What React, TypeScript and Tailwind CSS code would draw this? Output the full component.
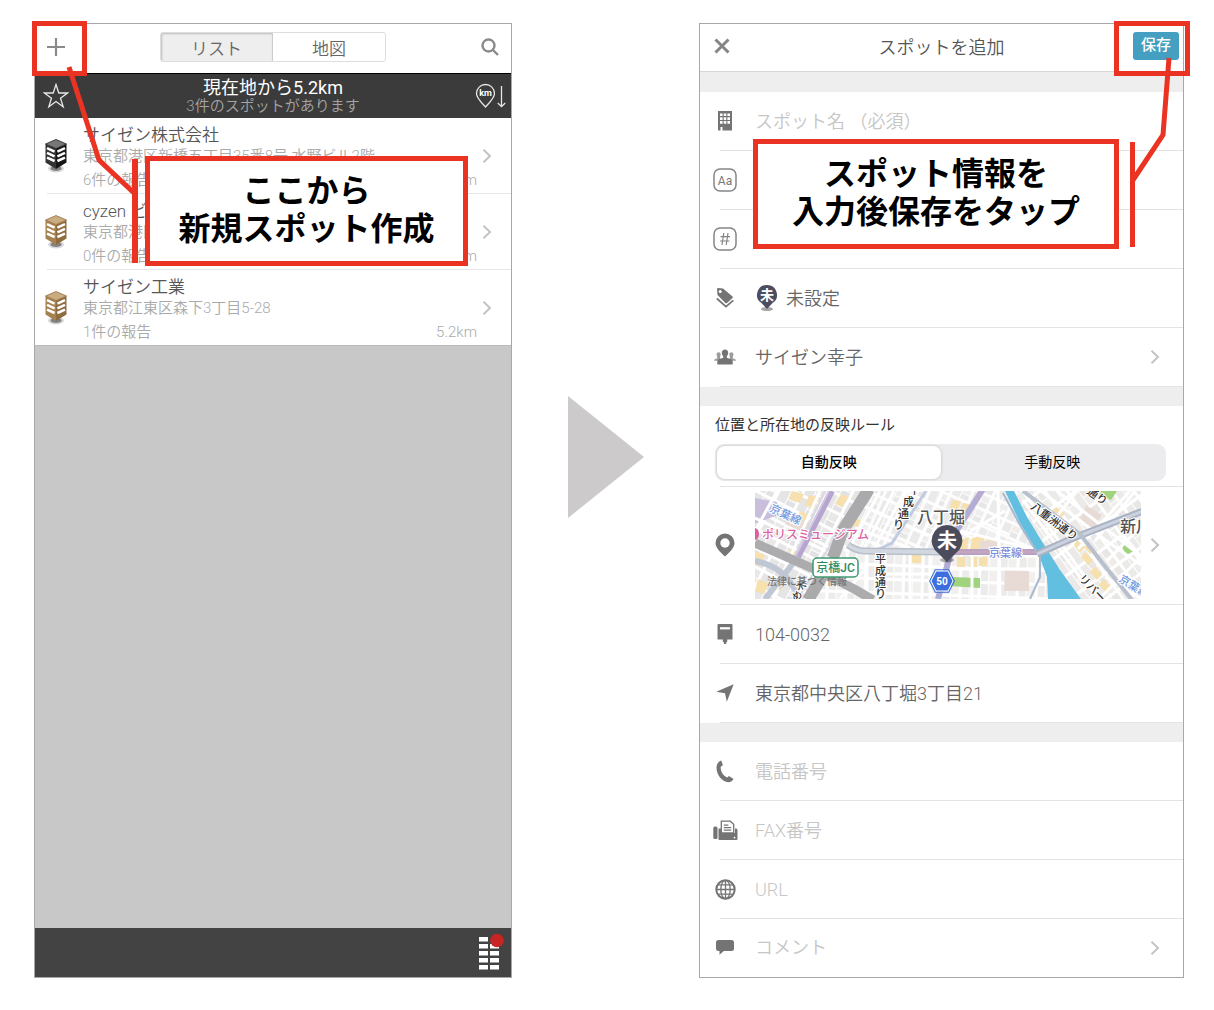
import type { ReactNode } from 'react'
import { clsx } from 'clsx'

const spots = [
  {
    name: 'サイゼン株式会社',
    address: '東京都港区新橋五丁目35番8号 水野ビル2階',
    reports: '6件の報告',
    distance: '5.2km',
    dark: true,
  },
  {
    name: 'cyzen ビル',
    address: '東京都港区新橋',
    reports: '0件の報告',
    distance: '5.2km',
    dark: false,
  },
  {
    name: 'サイゼン工業',
    address: '東京都江東区森下3丁目5-28',
    reports: '1件の報告',
    distance: '5.2km',
    dark: false,
  },
]

function Chevron() {
  return (
    <svg width="10" height="16" viewBox="0 0 10 16" fill="none" stroke="#c4c4c4" strokeWidth="2">
      <path d="M1.5 1.8 8 8l-6.500 6.200" />
    </svg>
  )
}

function Building({ dark }: { dark: boolean }) {
  const left = dark ? '#333' : '#a5814f'
  const right = dark ? '#161616' : '#8f6c3e'
  const top = dark ? '#777' : '#c9ac82'
  const edge = dark ? '#222' : '#94703f'
  return (
    <svg width="24" height="36" viewBox="0 0 24 36">
      <ellipse cx="12" cy="30.500" rx="8" ry="4" fill="#000" opacity=".15" />
      <ellipse cx="12" cy="30.500" rx="5.500" ry="2.500" fill="#000" opacity=".4" />
      <path d="M1.500 6v18.500L12 31V10.500z" fill={left} />
      <path d="M22.500 6v18.500L12 31V10.500z" fill={right} />
      <path d="M12 1.500 1.500 6 12 10.500 22.500 6z" fill={top} stroke={edge} strokeWidth=".8" />
      <path
        d="M3 10.200l7.600 3.400M3 14.900l7.600 3.400M3 19.600l7.600 3.400M21 10.200l-7.600 3.400M21 14.900l-7.600 3.400M21 19.600l-7.600 3.400"
        stroke="#fff"
        strokeWidth="2.500"
      />
    </svg>
  )
}

function UnsetPin() {
  return (
    <svg width="22" height="28" viewBox="0 0 22 28">
      <ellipse cx="11" cy="25" rx="6" ry="2" fill="#000" opacity=".35" />
      <path d="M11 1a9.800 9.800 0 0 1 5.500 18L11 25l-5.500-6A9.800 9.800 0 0 1 11 1z" fill="#4b4e61" />
      <text x="11" y="16" textAnchor="middle" fontSize="14" fontWeight="700" fill="#fff">未</text>
    </svg>
  )
}

const icons = {
  building: (
    <svg width="16" height="20" viewBox="0 0 16 20">
      <path d="M1 0h14v19.500H5.500V16H3.500v3.500H1z" fill="#747474" />
      <path
        d="M3 2.500h2.600v2.600H3zM6.700 2.500h2.600v2.600H6.700zM10.400 2.500H13v2.600h-2.600zM3 6.300h2.600v2.600H3zM6.700 6.300h2.600v2.600H6.700zM10.400 6.300H13v2.600h-2.600zM3 10.100h2.600v2.600H3zM6.700 10.100h2.600v2.600H6.700zM10.400 10.100H13v2.600h-2.600z"
        fill="#fff"
      />
    </svg>
  ),
  letters: (
    <svg width="24" height="24" viewBox="0 0 24 24">
      <rect x="1" y="1" width="22" height="22" rx="6" fill="none" stroke="#858585" strokeWidth="1.500" />
      <text x="12" y="16.500" textAnchor="middle" fontSize="12" fontWeight="400" fill="#777">Aa</text>
    </svg>
  ),
  hash: (
    <svg width="24" height="24" viewBox="0 0 24 24" fill="none" stroke="#858585" strokeWidth="1.500">
      <rect x="1" y="1" width="22" height="22" rx="6" />
      <path d="M10.800 6 9 18M15 6l-1.800 12M7.500 9.700h9.500M7 14h9.500" strokeWidth="1.200" />
    </svg>
  ),
  tags: (
    <svg width="18" height="22" viewBox="0 0 18 22">
      <path
        d="M1 2.200Q1 1 2.200 1L7 1.500 16.500 9.500q.8.800 0 1.600L11 16q-.8.600-1.600 0L1.500 8z"
        fill="#747474"
      />
      <circle cx="4.200" cy="4.400" r="1.500" fill="#fff" />
      <path d="M.8 11.500l9.200 8.200 7.300-6.300" fill="none" stroke="#747474" strokeWidth="1.700" />
    </svg>
  ),
  people: (
    <svg width="22" height="16" viewBox="0 0 22 16" fill="#747474">
      <circle cx="4.600" cy="5.400" r="2.100" opacity=".7" />
      <circle cx="17.400" cy="5.400" r="2.100" opacity=".7" />
      <path d="M0 11.800q0-1.800 3.200-2.300V7h3v4.800zM22 11.800q0-1.800-3.200-2.300V7h-3v4.800z" opacity=".7" />
      <path d="M11 .5c2 0 3.200 1.300 3.200 3.300 0 1.500-.6 2.700-1.400 3.400v1.600c2.800.9 5.400 1.500 5.900 3.200V15.500H3.300V12c.5-1.700 3.100-2.300 5.900-3.200V7.200C8.400 6.500 7.800 5.300 7.800 3.800 7.800 1.800 9 .5 11 .5z" />
    </svg>
  ),
  place: (
    <svg width="20" height="24" viewBox="0 0 20 24">
      <path d="M10 .5a9.500 9.500 0 0 1 9.500 9.500c0 4.500-5 9.500-9.500 13.500C5.500 19.500.5 14.500.5 10A9.500 9.500 0 0 1 10 .5z" fill="#747474" />
      <circle cx="10" cy="10" r="4.700" fill="#fff" />
    </svg>
  ),
  mailbox: (
    <svg width="16" height="20" viewBox="0 0 16 20">
      <path d="M1.500 0h13q1 0 1 1v14.500h-5.300V18H9.300v2H6.900v-2H5.800v-2.500H.5V1q0-1 1-1z" fill="#747474" />
      <path d="M3 3.200h10v2.200H3z" fill="#fff" />
    </svg>
  ),
  arrow: (
    <svg width="18" height="18" viewBox="0 0 18 18">
      <path d="M17.700.3 10.800 17.700 9 9.300.2 7.800z" fill="#747474" />
    </svg>
  ),
  phone: (
    <svg width="18" height="23" viewBox="0 0 18 23">
      <path
        d="M5.300.5 6.900 5.300 4.700 6.800c-.3 4.500 2.300 9 6.600 10.700l1.600-1.600 4.700 3.100c-1.300 2-3 3.300-5.300 3.300C5.800 22 .3 14.500.5 7.500.6 4 2.600 1 5.300.5z"
        fill="#747474"
      />
    </svg>
  ),
  fax: (
    <svg width="25" height="21" viewBox="0 0 25 21">
      <rect x=".3" y="6.500" width="4.200" height="12.500" rx="1.500" fill="#747474" />
      <path d="M5.500 8.500H8V13h14V8.500h1q1.500 0 1.500 1.500v9q0 1-1 1h-17q-1 0-1-1z" fill="#747474" />
      <path d="M8.300 13V1.200h9l3.400 3.200V13z" fill="#fff" stroke="#747474" strokeWidth="1.300" />
      <path d="M10.800 5.200h4.500M10.800 7.700h7.400M10.800 10.200h7.400" stroke="#747474" strokeWidth="1.200" />
      <circle cx="21.500" cy="17.600" r=".9" fill="#fff" />
    </svg>
  ),
  globe: (
    <svg width="21" height="21" viewBox="0 0 21 21" fill="none" stroke="#747474" strokeWidth="1.300">
      <circle cx="10.500" cy="10.500" r="9.200" strokeWidth="2" />
      <ellipse cx="10.500" cy="10.500" rx="4.700" ry="9.200" />
      <path d="M10.500 1v19M1 10.500h19M2.800 5.800h15.400M2.800 15.200h15.400" />
    </svg>
  ),
  comment: (
    <svg width="18" height="15" viewBox="0 0 18 15">
      <path d="M2.500 0h13Q18 0 18 2.500v6q0 2.500-2.500 2.500H7.800L3.500 14.800V11h-1Q0 11 0 8.500v-6Q0 0 2.500 0z" fill="#747474" />
    </svg>
  ),
}

function Row({ icon, children, chevron, last }: { icon: ReactNode; children?: ReactNode; chevron?: boolean; last?: boolean }) {
  return (
    <>
      <div className={clsx('flex items-center text-[18px] font-[350] text-[#666]', last ? 'h-[57px]' : 'h-[58px]')}>
        <div className="flex w-[50px] shrink-0 justify-center">{icon}</div>
        <div className="flex min-w-0 flex-1 items-center pl-[5px]">{children}</div>
        {chevron && <div className="pr-[23px]"><Chevron /></div>}
      </div>
      {!last && <div className="ml-5 h-px bg-[#e3e3e3]" />}
    </>
  )
}

function Field({ label, placeholder, type = 'text' }: { label: string; placeholder?: string; type?: string }) {
  return (
    <input
      type={type}
      aria-label={label}
      placeholder={placeholder}
      className="w-full bg-transparent font-[350] outline-none placeholder:text-[#c6c6c6]"
    />
  )
}

function Band({ className = 'h-[19px]' }: { className?: string }) {
  return <div className={clsx('bg-[#eee]', className)} />
}

function StreetMap() {
  return (
    <svg viewBox="0 0 386 108" preserveAspectRatio="xMidYMid slice" className="block h-[108px] w-full">
      <defs>
        <pattern id="west" width="22" height="17" patternUnits="userSpaceOnUse" patternTransform="rotate(27)">
          <rect width="22" height="17" fill="#fff" />
          <rect x="1" y="1" width="9" height="14" fill="#e6e5e6" />
          <rect x="11" y="1" width="9" height="8" fill="#eae8e6" />
          <rect x="11" y="10" width="9" height="5" fill="#e2e1e4" />
        </pattern>
        <pattern id="mid" width="20" height="15" patternUnits="userSpaceOnUse" patternTransform="rotate(24)">
          <rect width="20" height="15" fill="#fdfdfd" />
          <rect x="1" y="1" width="8" height="12" fill="#ebeaea" />
          <rect x="10" y="1" width="8" height="6" fill="#efeeec" />
          <rect x="10" y="8" width="8" height="5" fill="#e8e7e8" />
        </pattern>
        <pattern id="south" width="19" height="14" patternUnits="userSpaceOnUse" patternTransform="rotate(2)">
          <rect width="19" height="14" fill="#fff" />
          <rect x="1" y="1" width="7" height="11" fill="#ecebeb" />
          <rect x="9" y="1" width="8" height="11" fill="#f1f0ee" />
        </pattern>
        <pattern id="east" width="21" height="18" patternUnits="userSpaceOnUse" patternTransform="rotate(54)">
          <rect width="21" height="18" fill="#fff" />
          <rect x="1" y="1" width="8" height="7" fill="#e9e7e6" />
          <rect x="10" y="1" width="9" height="7" fill="#efedea" />
          <rect x="1" y="9" width="18" height="7" fill="#ebeae9" />
        </pattern>
      </defs>
      <rect width="386" height="108" fill="url(#mid)" />
      <path d="M0 0h113L53 108H0z" fill="url(#west)" />
      <path d="M90 57 290 62 293 108H60z" fill="url(#south)" />
      <path d="M262 0H386V108H325L288 52z" fill="url(#east)" />

      <g fill="#f6e0ad">
        <path d="M37 0l12 3-4 9-11-4zM54 4l10 3-5 11-9-4zM45 20l9 4-5 9-8-4zM86 3l8 3-7 10-7-3zM0 60l10 4-5 11-5-1zM3 88l11 5-5 10-9-3zM22 87l8 4-4 9-8-3zM36 58l9 4-3 6-9-4zM99 26l7 3-4 8-6-3z" />
        <path d="M197 9l9 1-5 15-8-2zM208 12l7 1-5 12-7-1zM204 50l10-4-2 12h-9zM217 47l13-3-2 14h-13zM232 49l9-1-2 10h-9zM202 66h8v10h-8zM214 66h8v10h-8zM224 66h8v9h-8zM157 64h9v8h-9z" />
        <path d="M322 49l8 7-5 6-6-8zM330 61l8 8-5 5-7-8zM340 75l7 9-5 5-7-8zM349 88l8 9-5 6-8-9zM333 53l6 6-4 4-6-7zM301 16l9 6-3 4-9-6z" />
      </g>
      <g fill="#e8dbd5">
        <path d="M36 24l19 8-5 10-20-9zM250 79l24 1v20h-25zM331 14l16 10-9 15-13-10zM225 50h17v8h-17z" />
      </g>
      <path d="M0 7l22 4 3 12L3 32H0z" fill="#c9bfdd" />
      <path d="M196 86l29 1v10l-31-2zM346 0h16l-6 9-12-6zM367 55l9-3 5 7-10 5z" fill="#9fd37d" />

      <g stroke="#fff" strokeWidth="3" fill="none">
        <path d="M22 0 0 40M65 0 28 82 18 108M0 27l112 52M110 78l-25 30M125 0 96 54M139 0l-30 58M114 18l60 27M100 37l55 20M150 0l-32 60M188 0l-28 60M225 30l30 14M243 0l2 108M202 39l80 20M196 78h95M130 83h52M112 60v48M155 60v48M175 60v48M217 64v44M250 20l-35 20" />
        <path d="M268 9l57 77 20 22M286 0l63 48 37 26M302 0l84 65M340 50l40-50M375 0l-52 58M322 0l-32 40M365 40l21 26-42 42M352 70l34-35M350 86l36 22" />
      </g>
      <g fill="none">
        <path d="M70 0 57 27 25 98M103 8 43 108" stroke="#d8d7e4" strokeWidth="2" />
        <path d="M171 0 137 52 124 58" stroke="#c0cbe2" strokeWidth="3" />
        <path d="M77 0 43 66" stroke="#b6a5ce" strokeWidth="6" />
        <path d="M74 0 40 66" stroke="#d5c7e2" strokeWidth="2" />
        <path d="M43 66 10 108M0 70q20 4 31 16 10 12 14 22" stroke="#bfc7d5" strokeWidth="6" />
        <path d="M114-2 88 39 77 69 53 109" stroke="#aaa9ac" strokeWidth="12" />
        <path d="M0 52 68 82 101 99 118 109" stroke="#acabad" strokeWidth="9" />
        <path d="M73 65l-5 9" stroke="#f7f7f7" strokeWidth="5" />
        <path d="M228-2 202 39 183 108" stroke="#b8abd0" strokeWidth="6" />
        <path d="M220 10 202 39 183 108" stroke="#a3b2e4" strokeWidth="1.500" />
        <path d="M93 54q8 6 17 6l75 1" stroke="#b7bfcb" strokeWidth="7" />
        <path d="M93 54q8 6 17 6l75 1" stroke="#d3d8e0" strokeWidth="4" />
        <path d="M185 61h100" stroke="#b7a2c5" strokeWidth="6" />
        <path d="M185 61h100" stroke="#dba9b5" strokeWidth="1" />
      </g>
      <path d="M250 0h9l13 26 16 26 17 27 21 29h-33l-1-22-8-22-19-32z" fill="#62bfe0" />
      <g fill="none">
        <path d="M248 2l17 32 20 32v20l-10 22" stroke="#a8b8cf" strokeWidth="2" />
        <path d="M282 63 316 48 388 20" stroke="#a9b3c5" strokeWidth="7" />
        <path d="M282 63 316 48 388 20" stroke="#ccd2dd" strokeWidth="3" />
        <path d="M325 43l20 26 32 40M268 0l57 43" stroke="#b8c0ce" strokeWidth="4" />
      </g>

      <g fontSize="11" fontWeight="500" stroke="#fff" strokeWidth="2" paintOrder="stroke">
        <text transform="translate(14 20) rotate(25)" fill="#6d97df">京葉線</text>
        <text x="234" y="66" fill="#7c8fda">京葉線</text>
        <text transform="translate(363 90) rotate(32)" fill="#6d97df">京葉線</text>
        <text x="7" y="48" fontSize="12" fill="#dc5fa3">ポリスミュージアム</text>
        <g fill="#333">
          <text x="154" y="3">平</text>
          <text x="148" y="15">成</text>
          <text x="143" y="27">通</text>
          <text x="138" y="38">り</text>
          <text x="120" y="72">平</text>
          <text x="120" y="84">成</text>
          <text x="120" y="96">通</text>
          <text x="120" y="107">り</text>
          <text transform="translate(275 17) rotate(37)">八重洲通り</text>
          <text transform="translate(331 2) rotate(35)">通り</text>
          <text transform="translate(323 88) rotate(46)">リバー</text>
          <text transform="translate(43 100) rotate(-25)" fontSize="10">木</text>
          <text transform="translate(39 110) rotate(-25)" fontSize="10">め</text>
        </g>
        <g fontSize="16" fill="#555">
          <text x="162" y="32">八丁堀</text>
          <text x="365" y="41">新川</text>
        </g>
        <text x="12" y="94" fontSize="10" fill="#777" strokeWidth="0">法律に基づく情報</text>
      </g>
      <path d="M0 37q4 1 4 6t-4 6" fill="#dc5fa3" />
      <rect x="58" y="67" width="45" height="19" rx="4" fill="#fff" stroke="#3b9b70" strokeWidth="1.500" />
      <text x="80.500" y="81" textAnchor="middle" fontSize="12" fontWeight="500" fill="#2b8c60">京橋JC</text>
      <path d="M181 80h12l5 10-5 10h-12l-5-10z" fill="#3c6fdd" stroke="#fff" strokeWidth="1" />
      <path d="M181 80h12l5 10-5 10h-12l-5-10z" fill="none" stroke="#3c6fdd" strokeWidth="1" transform="translate(187 90) scale(1.120) translate(-187 -90)" />
      <text x="187" y="94" textAnchor="middle" fontSize="10" fontWeight="700" fill="#fff">50</text>
      <ellipse cx="192" cy="69" rx="7" ry="2.500" fill="#000" opacity=".3" />
      <path d="M192 34a15.500 15.500 0 0 1 9 28L192 71l-9-9a15.500 15.500 0 0 1 9-28z" fill="#4a4c5c" />
      <text x="192" y="57" textAnchor="middle" fontSize="20" fontWeight="700" fill="#fff">未</text>
    </svg>
  )
}

function SpotList() {
  return (
    <section className="relative flex flex-col border border-[#a8a8a8] bg-white">
      <header className="grid h-[49px] grid-cols-[1fr_226px_1fr] items-center pb-1">
        <button aria-label="追加" className="justify-self-start pl-3">
          <svg width="18" height="18" viewBox="0 0 18 18" stroke="#8a8a8a" strokeWidth="2.200">
            <path d="M9 0v18M0 9h18" />
          </svg>
        </button>
        <div className="grid h-[30px] grid-cols-2 overflow-hidden rounded-[3px] border border-[#ddd] text-[17px] leading-8 font-[350] text-[#666]">
          <button className="border-r border-[#ccc] bg-[#eee] shadow-[inset_1px_1px_2px_#bbb]">リスト</button>
          <button>地図</button>
        </div>
        <button aria-label="検索" className="justify-self-end pr-3">
          <svg width="18" height="18" viewBox="0 0 18 18" fill="none" stroke="#8a8a8a" strokeWidth="2.400">
            <circle cx="7.500" cy="7.500" r="6" />
            <path d="M12 12l5 5" />
          </svg>
        </button>
      </header>

      <div className="flex h-[45px] items-center border-t border-black bg-[#3b3b3b] text-white">
        <div className="w-11 pl-2">
          <svg width="26" height="26" viewBox="0 0 26 26" fill="none" stroke="#e6e6e6" strokeWidth="1.300">
            <path d="M13 1.500 15.800 10H24.500L17.500 15.200 20.200 23.700 13 18.500 5.800 23.700 8.500 15.200 1.500 10H10.200z" />
          </svg>
        </div>
        <div className="flex-1 pt-0.5 text-center leading-[18px]">
          <p className="text-[18px]">現在地から5.2km</p>
          <p className="text-[15px] font-[350] text-[#a5a5a5]">3件のスポットがあります</p>
        </div>
        <div className="flex w-11 justify-end pr-1">
          <svg width="32" height="26" viewBox="0 0 32 26" fill="none" stroke="#e6e6e6" strokeWidth="1.300">
            <path d="M10.500 1.500a9 9 0 0 1 9 9c0 4.500-5 9-9 13.500-4-4.500-9-9-9-13.500a9 9 0 0 1 9-9z" />
            <path d="M26.500 3v20.500M22.800 20l3.700 3.700 3.700-3.700" />
            <text x="10.500" y="13" textAnchor="middle" fontSize="9" fontWeight="700" fill="#fff" stroke="none">km</text>
          </svg>
        </div>
      </div>

      <ul>
        {spots.map((spot, i) => (
          <li key={spot.name}>
            {i > 0 && <div className="ml-3 h-px bg-[#e6e6e6]" />}
            <div className="flex h-[75px] items-center">
              <div className="w-12 shrink-0 pl-[9px]">
                <Building dark={spot.dark} />
              </div>
              <div className="min-w-0 flex-1 pt-[3px] font-[350]">
                <h2 className="text-[17px] leading-[22px] text-[#555]">{spot.name}</h2>
                <p className="text-[15px] leading-5 text-[#aaa]">{spot.address}</p>
                <p className="mt-1 flex justify-between text-[15px] leading-5 text-[#aaa]">
                  <span>{spot.reports}</span>
                  <span>{spot.distance}</span>
                </p>
              </div>
              <div className="w-[34px] pl-[5px]">
                <Chevron />
              </div>
            </div>
          </li>
        ))}
      </ul>

      <div className="flex-1 border-t border-[#bbb] bg-[#c8c8c8]" />

      <footer className="flex h-[49px] items-center justify-end bg-[#434343] pr-1">
        <button aria-label="メニュー">
          <svg width="30" height="40" viewBox="0 0 30 40">
            <path
              d="M2 4h9v4.500H2zM2 11h9v4.500H2zM2 18h9v4.500H2zM2 25h9v4.500H2zM2 32h9v4.500H2zM13 11h9v4.500h-9zM13 18h9v4.500h-9zM13 25h9v4.500h-9zM13 32h9v4.500h-9z"
              fill="#fff"
            />
            <circle cx="20" cy="7.500" r="6.800" fill="#c92424" />
          </svg>
        </button>
      </footer>

      <div className="absolute -top-[3px] -left-[3px] h-[55px] w-[55px] border-[5px] border-[#ea3323]" />
      <svg className="absolute top-0 left-0" width="110" height="250" fill="none" stroke="#ea3323" strokeWidth="5">
        <path d="M34 43 64 136 99 169" />
        <path d="M100 135v104" strokeWidth="6" />
      </svg>
      <Callout className="top-[132px] right-[43px] left-[110px]">
        ここから
        <br />
        新規スポット作成
      </Callout>
    </section>
  )
}

function Callout({ className, children }: { className: string; children: ReactNode }) {
  return (
    <div
      className={clsx(
        'absolute flex h-[110px] items-center justify-center border-[5px] border-[#ea3323] bg-white pb-0.5 text-center text-[32px] leading-[38px] font-bold whitespace-nowrap text-black',
        className,
      )}
    >
      <p>{children}</p>
    </div>
  )
}

function SpotForm() {
  return (
    <form className="relative border border-[#a8a8a8] bg-white" onSubmit={e => e.preventDefault()}>
      <header className="grid h-12 grid-cols-[1fr_auto_1fr] items-center border-b border-[#d6d6d6] pb-1">
        <button type="button" aria-label="閉じる" className="justify-self-start pl-[14px]">
          <svg width="16" height="16" viewBox="0 0 16 16" stroke="#858585" strokeWidth="3">
            <path d="M1.500 1.500l13 13M14.500 1.500l-13 13" />
          </svg>
        </button>
        <h1 className="pt-1 text-[18px] font-[350] text-[#555]">スポットを追加</h1>
        <button type="submit" className="mr-1 h-7 w-[46px] justify-self-end rounded-[3px] bg-[#459fc0] text-[15px] font-medium text-white">
          保存
        </button>
      </header>
      <Band className="h-5" />

      <Row icon={icons.building}><Field label="スポット名" placeholder="スポット名 （必須）" /></Row>
      <Row icon={icons.letters}><Field label="フリガナ" /></Row>
      <Row icon={icons.hash}><Field label="コード" /></Row>
      <Row icon={icons.tags}>
        <span className="flex items-center gap-2 pl-px"><UnsetPin />未設定</span>
      </Row>
      <Row icon={icons.people} chevron>サイゼン幸子</Row>
      <Band />

      <div className="pr-[17px] pb-[5px] pl-[15px] pt-[9px]">
        <p className="text-[15px] leading-5 text-[#333]">位置と所在地の反映ルール</p>
        <div className="mt-[9px] grid h-[37px] grid-cols-2 rounded-[9px] bg-[#ececee] p-[2px] text-[14px] text-black">
          <button type="button" className="rounded-[8px] bg-white font-medium shadow-[0_0_3px_#bbb]">自動反映</button>
          <button type="button">手動反映</button>
        </div>
      </div>
      <div className="ml-5 h-px bg-[#e3e3e3]" />
      <div className="flex items-center pt-1 pb-[5px]">
        <div className="flex w-[50px] shrink-0 justify-center">{icons.place}</div>
        <div className="min-w-0 flex-1 pr-[9px] pl-[5px]"><StreetMap /></div>
        <div className="pr-[23px]"><Chevron /></div>
      </div>
      <div className="ml-5 h-px bg-[#e3e3e3]" />
      <Row icon={icons.mailbox}>104-0032</Row>
      <Row icon={icons.arrow}>東京都中央区八丁堀3丁目21</Row>
      <Band />

      <Row icon={icons.phone}><Field label="電話番号" placeholder="電話番号" type="tel" /></Row>
      <Row icon={icons.fax}><Field label="FAX番号" placeholder="FAX番号" type="tel" /></Row>
      <Row icon={icons.globe}><Field label="URL" placeholder="URL" type="url" /></Row>
      <Row icon={icons.comment} chevron last><Field label="コメント" placeholder="コメント" /></Row>

      <div className="absolute -top-[3px] -right-[7px] h-[55px] w-[76px] border-[5px] border-[#ea3323]" />
      <svg className="absolute top-0 right-0" width="60" height="250" fill="none" stroke="#ea3323" strokeWidth="5">
        <path d="M46 34 40 111 10 156" />
        <path d="M9.500 118v105" />
      </svg>
      <Callout className="top-[115px] right-[64px] left-[53px]">
        スポット情報を
        <br />
        入力後保存をタップ
      </Callout>
    </form>
  )
}

export default function App() {
  return (
    <main className="grid min-h-screen grid-cols-[478fr_187fr_485fr] bg-white pt-[23px] pr-[30px] pb-8 pl-[34px] font-['Roboto','Noto_Sans_CJK_JP',sans-serif]">
      <SpotList />
      <svg className="mt-[373px] justify-self-center" width="76" height="122" viewBox="0 0 76 122">
        <path d="M0 0 76 61 0 122z" fill="#cccacb" />
      </svg>
      <SpotForm />
    </main>
  )
}
